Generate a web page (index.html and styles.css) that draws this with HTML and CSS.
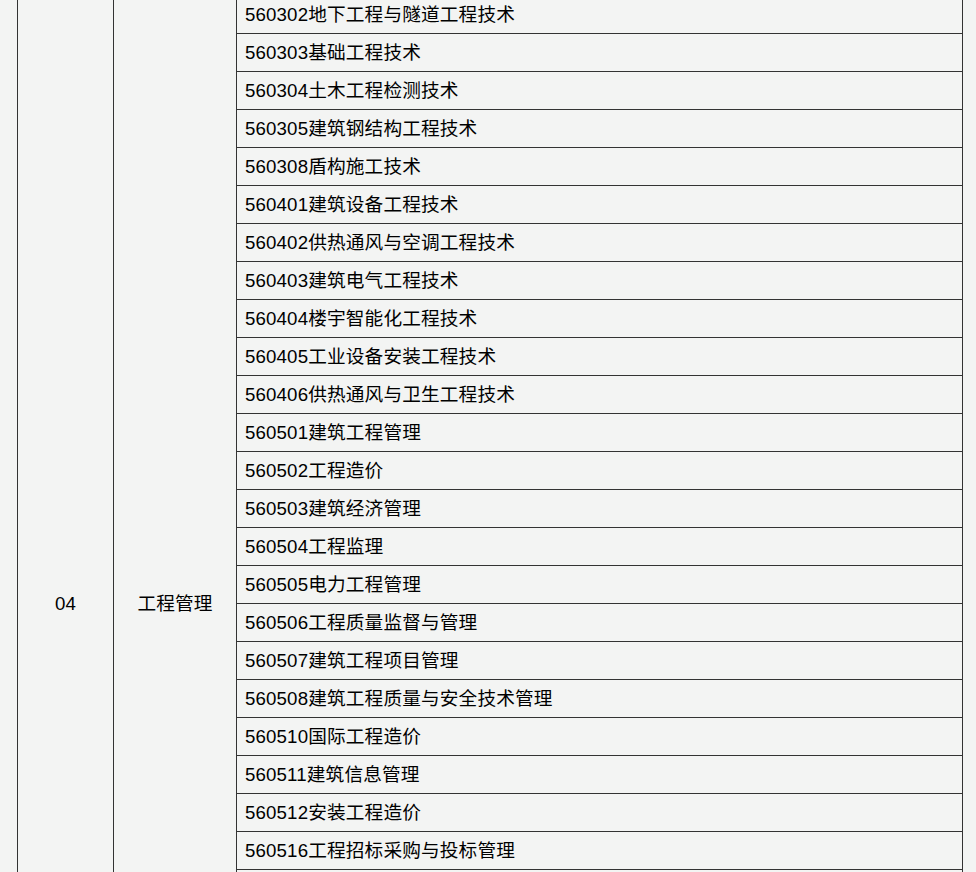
FILE: index.html
```html
<!DOCTYPE html>
<html lang="zh-CN">
<head>
<meta charset="utf-8">
<title>专业目录</title>
<link rel="stylesheet" href="styles.css">
</head>
<body>
<div class="page">
<table class="majors">
<colgroup>
<col class="c-no">
<col class="c-cat">
<col class="c-major">
</colgroup>
<tbody>
<tr><td class="merged" rowspan="32">04</td><td class="merged cat" rowspan="32">工程管理</td><td class="major">560302地下工程与隧道工程技术</td></tr>
<tr><td class="major">560303基础工程技术</td></tr>
<tr><td class="major">560304土木工程检测技术</td></tr>
<tr><td class="major">560305建筑钢结构工程技术</td></tr>
<tr><td class="major">560308盾构施工技术</td></tr>
<tr><td class="major">560401建筑设备工程技术</td></tr>
<tr><td class="major">560402供热通风与空调工程技术</td></tr>
<tr><td class="major">560403建筑电气工程技术</td></tr>
<tr><td class="major">560404楼宇智能化工程技术</td></tr>
<tr><td class="major">560405工业设备安装工程技术</td></tr>
<tr><td class="major">560406供热通风与卫生工程技术</td></tr>
<tr><td class="major">560501建筑工程管理</td></tr>
<tr><td class="major">560502工程造价</td></tr>
<tr><td class="major">560503建筑经济管理</td></tr>
<tr><td class="major">560504工程监理</td></tr>
<tr><td class="major">560505电力工程管理</td></tr>
<tr><td class="major">560506工程质量监督与管理</td></tr>
<tr><td class="major">560507建筑工程项目管理</td></tr>
<tr><td class="major">560508建筑工程质量与安全技术管理</td></tr>
<tr><td class="major">560510国际工程造价</td></tr>
<tr><td class="major">560511建筑信息管理</td></tr>
<tr><td class="major">560512安装工程造价</td></tr>
<tr><td class="major">560516工程招标采购与投标管理</td></tr>
<tr><td class="major"></td></tr>
<tr><td class="major"></td></tr>
<tr><td class="major"></td></tr>
<tr><td class="major"></td></tr>
<tr><td class="major"></td></tr>
<tr><td class="major"></td></tr>
<tr><td class="major"></td></tr>
<tr><td class="major"></td></tr>
<tr><td class="major"></td></tr>
</tbody>
</table>
</div>
</body>
</html>
```

FILE: styles.css
```css
html, body {
  margin: 0;
  padding: 0;
  background: #f3f4f3;
  overflow: hidden;
}

.page {
  padding-left: 17px;
  margin-top: -5px;
}

.majors {
  border-collapse: collapse;
  width: 945px;
  table-layout: fixed;
  font-family: "Liberation Sans", "Noto Sans CJK SC", sans-serif;
  font-size: 14pt;
  letter-spacing: 0.15px;
  color: #000;
}

.c-no { width: 96px; }
.c-cat { width: 123px; }
.c-major { width: 726px; }

.majors td {
  border: 1px solid #333;
  height: 38px;
  padding: 0 8px;
  box-sizing: border-box;
  vertical-align: middle;
  white-space: nowrap;
  line-height: 20px;
}

.majors td.merged {
  text-align: center;
  padding: 0;
}

.majors td.major {
  text-align: left;
}
```
